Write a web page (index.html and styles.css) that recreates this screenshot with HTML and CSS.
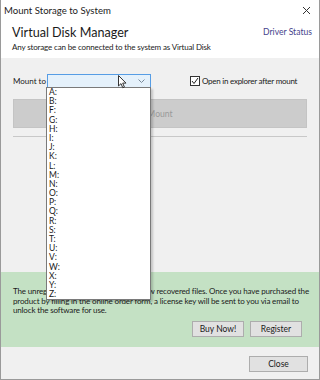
FILE: index.html
```html
<!DOCTYPE html>
<html lang="en">
<head>
    <meta charset="UTF-8">
    <meta name="viewport" content="width=device-width, initial-scale=1.0">
    <title>Mount Storage to System</title>
    <link rel="stylesheet" href="styles.css">
</head>
<body>
    <div class="window">
        <div class="titlebar">
            <span class="title">Mount Storage to System</span>
            <svg class="close-x" width="9" height="9" viewBox="0 0 9 9">
                <path d="M1 1 L8 8 M8 1 L1 8" stroke="#333" stroke-width="1"/>
            </svg>
        </div>
        <div class="header">
            <div class="header-text">
                <h1>Virtual Disk Manager</h1>
                <p>Any storage can be connected to the system as Virtual Disk</p>
            </div>
            <a class="driver-link">Driver Status</a>
        </div>
        <div class="content">
            <div class="mount-row">
                <span class="mount-label">Mount to</span>
                <div class="combo">
                    <svg class="chevron" width="7" height="4" viewBox="0 0 7 4">
                        <path d="M0.5 0.5 L3.5 3.5 L6.5 0.5" stroke="#7a8a9a" stroke-width="1" fill="none"/>
                    </svg>
                </div>
                <label class="check-label">
                    <span class="checkbox">
                        <svg width="8" height="8" viewBox="0 0 8 8">
                            <path d="M1 4 L3 6.5 L7 1" stroke="#222" stroke-width="1" fill="none"/>
                        </svg>
                    </span>
                    Open in explorer after mount
                </label>
            </div>
            <button class="mount-btn" disabled>Mount</button>
            <div class="sep"></div>
        </div>
        <div class="notice">
            <p>The unregistered version can only preview recovered files. Once you have purchased the<br>product by filling in the online order form, a license key will be sent to you via email to<br>unlock the software for use.</p>
            <div class="notice-buttons">
                <button class="btn">Buy Now!</button>
                <button class="btn">Register</button>
            </div>
        </div>
        <div class="footer">
            <button class="btn close-btn">Close</button>
        </div>

        <ul class="drive-list">
            <li>A:</li><li>B:</li><li>F:</li><li>G:</li><li>H:</li><li>I:</li>
            <li>J:</li><li>K:</li><li>L:</li><li>M:</li><li>N:</li><li>O:</li>
            <li>P:</li><li>Q:</li><li>R:</li><li>S:</li><li>T:</li><li>U:</li>
            <li>V:</li><li>W:</li><li>X:</li><li>Y:</li><li>Z:</li>
        </ul>

        <svg class="pointer" width="9" height="14" viewBox="0 0 9 14">
            <path d="M0.5 0.5 L0.5 11 L3 8.6 L4.8 12.8 L6.4 12.1 L4.7 8.1 L8 8.1 Z" fill="#fff" stroke="#333" stroke-width="1" stroke-linejoin="round"/>
        </svg>
    </div>
</body>
</html>
```

FILE: styles.css
```css
* {
    box-sizing: border-box;
}

body {
    margin: 0;
    font-family: Lato, "Noto Sans", sans-serif;
    color: #1a1a1a;
}

.window {
    position: relative;
    width: 320px;
    height: 380px;
    border: 1px solid #9a9a9a;
    border-top: none;
    background: #f0f0f0;
    display: flex;
    flex-direction: column;
    overflow: hidden;
}

.titlebar {
    height: 20px;
    background: #fff;
    display: flex;
    align-items: center;
    justify-content: space-between;
    padding: 0 8px 0 3px;
}

.title {
    font-size: 9.6px;
    color: #222;
    white-space: nowrap;
}

.header {
    height: 38px;
    background: #fff;
    display: flex;
    justify-content: space-between;
    padding: 3px 7px 0 11px;
}

.header h1 {
    margin: 0;
    font-size: 12.6px;
    font-weight: normal;
    line-height: 19px;
    color: #1a1a1a;
    white-space: nowrap;
}

.header p {
    margin: 0;
    font-size: 8px;
    letter-spacing: -0.15px;
    line-height: 11px;
    color: #222;
    white-space: nowrap;
}

.driver-link {
    font-size: 8.6px;
    color: #46438c;
    margin-top: 4px;
    white-space: nowrap;
}

.content {
    height: 214px;
    padding: 16px 12px 0;
}

.mount-row {
    display: flex;
    align-items: center;
    height: 13px;
    font-size: 8px;
    white-space: nowrap;
}

.mount-label {
    width: 34px;
    flex-shrink: 0;
}

.combo {
    width: 104px;
    height: 14px;
    flex-shrink: 0;
    background: #e5f1fb;
    border: 1px solid #569de5;
    display: flex;
    align-items: center;
    justify-content: flex-end;
    padding-right: 5px;
}

.check-label {
    display: flex;
    align-items: center;
    gap: 2px;
    margin-left: 39px;
    letter-spacing: -0.25px;
}

.checkbox {
    width: 10px;
    height: 10px;
    border: 1px solid #333;
    background: #fff;
    display: flex;
    align-items: center;
    justify-content: center;
}

.mount-btn {
    display: block;
    width: 100%;
    height: 29px;
    margin-top: 12px;
    background: #cccccc;
    border: 1px solid #c4c4c4;
    color: #9a9a9a;
    font-family: inherit;
    font-size: 8.6px;
}

.sep {
    height: 1px;
    margin-top: 8px;
    background: #c8c8c8;
}

.notice {
    height: 75px;
    background: #c4e1c4;
    padding: 15px 12px 0;
}

.notice p {
    margin: 0;
    font-size: 8px;
    letter-spacing: -0.15px;
    line-height: 9.5px;
    color: #1a1a1a;
    white-space: nowrap;
}

.notice-buttons {
    display: flex;
    justify-content: flex-end;
    gap: 6px;
    margin-top: 5px;
    padding-right: 5px;
}

.btn {
    height: 16px;
    width: 52px;
    padding: 0;
    background: #e1e1e1;
    border: 1px solid #adadad;
    font-family: inherit;
    font-size: 8.5px;
    color: #1a1a1a;
}

.footer {
    flex: 1;
    display: flex;
    justify-content: flex-end;
    padding: 9px 11px 0;
}

.close-btn {
    width: 59px;
}

.drive-list {
    position: absolute;
    left: 45px;
    top: 87px;
    width: 105px;
    height: 213px;
    margin: 0;
    padding: 0 0 0 2px;
    list-style: none;
    background: #fff;
    border: 1px solid #7a7a7a;
    box-shadow: 2px 2px 2px rgba(0, 0, 0, 0.18);
    font-size: 8.5px;
    color: #1a1a1a;
}

.drive-list li {
    height: 9.2px;
    line-height: 9.2px;
}

.pointer {
    position: absolute;
    left: 117px;
    top: 75px;
}
```
